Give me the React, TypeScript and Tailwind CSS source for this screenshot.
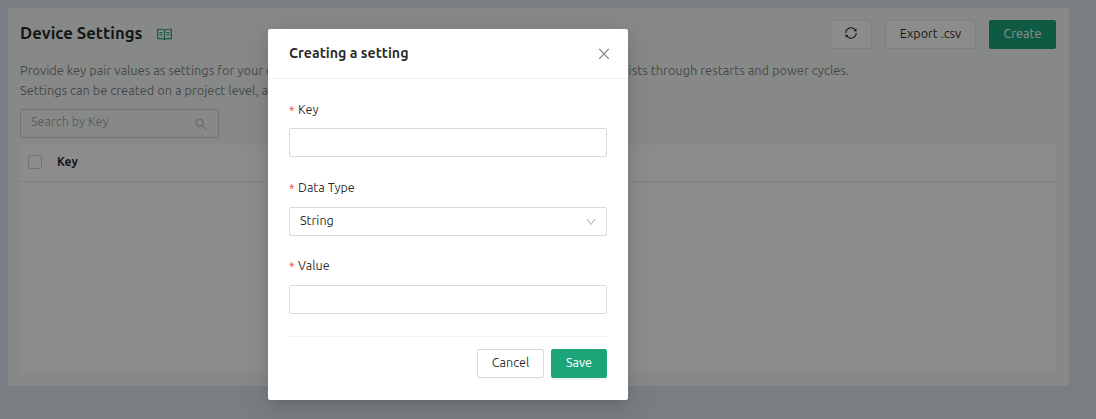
import { AiOutlineDown, AiOutlineRead, AiOutlineSearch, AiOutlineSync } from "react-icons/ai";

function CloseIcon() {
  return (
    <svg viewBox="0 0 12 12" className="size-3 text-black/50" fill="none" stroke="currentColor" strokeWidth="1.2">
      <path d="M1.2 0.8 L10.8 10.8 M10.8 0.8 L1.2 10.8" />
    </svg>
  );
}

function FieldLabel({ text }: { text: string }) {
  return (
    <div className="flex h-5 items-center gap-1 pb-0.5 leading-5">
      <span className="w-[5px] pt-0.5 font-['Noto_Sans',sans-serif] text-[10px] leading-4 text-[#ff4d4f]">*</span>
      <span>{text}</span>
    </div>
  );
}

function SettingsPage() {
  return (
    <div className="h-[419px] bg-[#dfe4ed] pt-2 pl-2">
      <section className="h-[378px] w-[1061px] rounded-[3px] bg-[#f5faf7] pt-3 pr-[13px] pl-3">
        <header className="flex h-[29px] items-center">
          <h1 className="w-[136px] pb-[3px] text-[16.7px] font-bold whitespace-nowrap">Device Settings</h1>
          <AiOutlineRead className="size-[17px] text-[#1da57a]" />
          <div className="ml-auto flex gap-[13px]">
            <button className="flex h-[29px] w-[42px] items-center justify-center rounded-xs border border-[#d9d9d9]/60 bg-white pb-[3px]">
              <AiOutlineSync className="size-[14px]" />
            </button>
            <button className="h-[29px] w-[91px] rounded-xs border border-[#d9d9d9]/60 bg-white pb-0.5">Export .csv</button>
            <button className="h-[29px] w-[67px] rounded-xs bg-[#1da57a] pb-0.5 text-white">Create</button>
          </div>
        </header>
        <div className="mt-[11px] h-[41px] w-[829px] text-[12.8px] leading-5 whitespace-nowrap text-black/50">
          <p className="flex justify-between">
            <span>Provide key pair values as settings for your d</span>
            <span>persists through restarts and power cycles.</span>
          </p>
          <p>Settings can be created on a project level, an</p>
        </div>
        <div className="mt-2 flex h-[29px] w-[199px] items-center justify-between rounded-xs border border-[#cfd3d0] pr-2.5 pl-2.5 text-black/35">
          <span className="pb-1">Search by Key</span>
          <AiOutlineSearch className="size-[14px] text-black/25" />
        </div>
        <div className="mt-[7px] h-[228px] bg-white">
          <div className="flex h-[37px] items-center gap-[15px] border-b border-[#e9e9e9] pb-[3px] pl-2">
            <span className="size-[14px] rounded-xs border border-[#d0d0d0]" />
            <span className="text-[12px] font-semibold">Key</span>
          </div>
        </div>
      </section>
    </div>
  );
}

function CreateDialog() {
  return (
    <div role="dialog" className="h-[371px] w-[360px] rounded-xs bg-white shadow-[0_3px_6px_-4px_rgba(0,0,0,0.12),0_6px_16px_0_rgba(0,0,0,0.08),0_9px_28px_8px_rgba(0,0,0,0.05)]">
      <header className="flex h-[50px] items-center justify-between border-b border-[#f0f0f0] pr-[18px] pl-[21px]">
        <h2 className="text-[14.2px] font-semibold">Creating a setting</h2>
        <CloseIcon />
      </header>
      <div className="px-[21px] pt-[21px]">
        <FieldLabel text="Key" />
        <div className="mt-2 h-[29px] rounded-xs border border-[#d9d9d9]" />
        <div className="mt-[21px]"><FieldLabel text="Data Type" /></div>
        <div className="mt-[9px] flex h-[29px] items-center justify-between rounded-xs border border-[#d9d9d9] pr-[9px] pl-2.5">
          <span className="pb-0.5">String</span>
          <AiOutlineDown className="size-3 text-black/30" />
        </div>
        <div className="mt-5"><FieldLabel text="Value" /></div>
        <div className="mt-[9px] h-[29px] rounded-xs border border-[#d9d9d9]" />
        <footer className="mt-[22px] flex justify-end gap-[7px] border-t border-[#f0f0f0] pt-3">
          <button className="h-[29px] w-[67px] rounded-xs border border-[#d9d9d9] pb-0.5 shadow-[0_2px_0_rgba(0,0,0,0.015)]">Cancel</button>
          <button className="h-[29px] w-14 rounded-xs bg-[#1da57a] pb-0.5 text-white shadow-[0_2px_0_rgba(0,0,0,0.045)]">Save</button>
        </footer>
      </div>
    </div>
  );
}

export default function App() {
  return (
    <main className="relative h-[419px] w-[1096px] overflow-hidden font-[Ubuntu,'Noto_Sans',sans-serif] text-[12.6px] text-black/85">
      <SettingsPage />
      <div className="absolute inset-0 flex items-start bg-black/45 pt-[29px] pl-[268px]">
        <CreateDialog />
      </div>
    </main>
  );
}
